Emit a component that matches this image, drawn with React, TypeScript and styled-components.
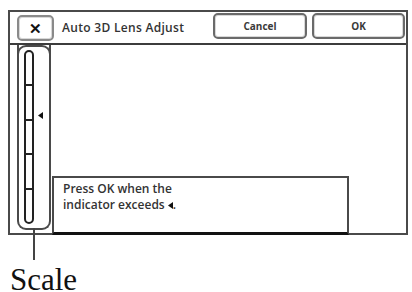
import React from 'react'
import styled, { createGlobalStyle } from 'styled-components'

const GlobalStyle = createGlobalStyle`
  html, body {
    margin: 0;
    padding: 0;
    background: #fff;
  }
  body {
    font-family: 'Open Sans', 'Liberation Sans', sans-serif;
  }
`

const Page = styled.div`
  width: 412px;
  height: 292px;
  padding: 10px 0 0 8px;
  box-sizing: border-box;
  overflow: hidden;
`

const Screen = styled.div`
  width: 400px;
  height: 225px;
  box-sizing: border-box;
  border: 2px solid #4a4a4a;
  display: grid;
  grid-template-rows: 33px 1fr;
`

const Header = styled.div`
  display: flex;
  align-items: flex-start;
  border-bottom: 2px solid #3c3c3c;
  padding: 1px 1px 0 7px;
`

const Button = styled.button<{ $w: number }>`
  width: ${p => p.$w}px;
  height: 26px;
  box-sizing: border-box;
  border: 2px solid #6a6a6a;
  border-radius: 5px;
  box-shadow: inset 0 0 0 1px #d8d8d8;
  background: #fff;
  font-family: 'Open Sans', 'Liberation Sans', sans-serif;
  font-weight: 700;
  font-size: 10px;
  color: #3a3a3a;
  padding: 0;
  display: flex;
  align-items: center;
  justify-content: center;
`

const CloseButton = styled(Button)`
  margin-top: 2px;
  font-size: 15px;
  color: #111;
  border-color: #8a8a8a;
`

const Title = styled.div`
  flex: 1;
  padding: 6px 0 0 8px;
  font-size: 12px;
  font-weight: 600;
  color: #333;
  letter-spacing: 0.3px;
`

const Actions = styled.div`
  display: flex;
  gap: 5px;
`

const Body = styled.div`
  display: flex;
  padding-left: 7px;
`

const Pill = styled.div`
  position: relative;
  width: 34px;
  height: 185px;
  box-sizing: border-box;
  border: 2px solid #4a4a4a;
  border-top: none;
  border-radius: 0 0 9px 9px;
  padding: 5px 0 0 5px;
  flex-shrink: 0;

  &::before {
    content: '';
    position: absolute;
    left: -2px;
    right: -2px;
    top: 0;
    height: 10px;
    border: 2px solid #4a4a4a;
    border-bottom: none;
    border-radius: 9px 9px 0 0;
  }

  &::after {
    content: '';
    position: absolute;
    left: 14px;
    top: 100%;
    width: 2px;
    height: 32px;
    background: #444;
  }
`

const Bar = styled.div`
  width: 10px;
  height: 174px;
  box-sizing: border-box;
  border: 2px solid #222;
  border-radius: 5px;
  display: flex;
  flex-direction: column;
`

const Segment = styled.div`
  flex: 1;
  & + & {
    border-top: 2px solid #222;
  }
`

const Pointer = styled.svg`
  position: absolute;
  left: 19px;
`

const Message = styled.div`
  align-self: flex-end;
  width: 297px;
  height: 59px;
  box-sizing: border-box;
  margin: 0 0 -2px 1px;
  border: 2px solid #4a4a4a;
  border-bottom: 3px solid #111;
  padding: 3px 0 0 9px;
  font-size: 12px;
  font-weight: 600;
  line-height: 16px;
  color: #333;
`

const Callout = styled.div`
  padding: 33px 0 0 2px;
  font-family: 'Liberation Serif', 'DejaVu Serif', serif;
  font-size: 31px;
  line-height: 24px;
  color: #111;
`

const Tri: React.FC<{ w: number; h: number }> = ({ w, h }) => (
  <svg width={w} height={h} viewBox="0 0 5 7">
    <polygon points="5,0 5,7 0,3.5" fill="#111" />
  </svg>
)

export default function App() {
  const level = 67
  return (
    <Page>
      <GlobalStyle />
      <Screen>
        <Header>
          <CloseButton $w={37}>✕</CloseButton>
          <Title>Auto 3D Lens Adjust</Title>
          <Actions>
            <Button $w={94}>Cancel</Button>
            <Button $w={93}>OK</Button>
          </Actions>
        </Header>
        <Body>
          <Pill>
            <Bar>
              {[0, 1, 2, 3, 4].map(i => (
                <Segment key={i} />
              ))}
            </Bar>
            <Pointer width="5" height="7" viewBox="0 0 5 7" style={{ top: level }}>
              <polygon points="5,0 5,7 0,3.5" fill="#111" />
            </Pointer>
          </Pill>
          <Message>
            Press OK when the
            <br />
            indicator exceeds <Tri w={5} h={7} />.
          </Message>
        </Body>
      </Screen>
      <Callout>Scale</Callout>
    </Page>
  )
}
